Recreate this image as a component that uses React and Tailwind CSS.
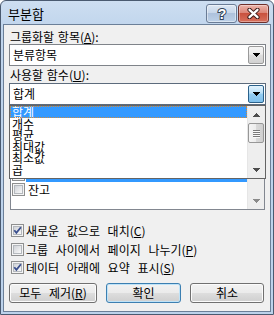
import React from "react";

function Tri({ dir = "down", color = "#000" }) {
  const rows = [
    [0, 7],
    [1, 5],
    [2, 3],
    [3, 1],
  ];
  return (
    <svg width="7" height="4" viewBox="0 0 7 4" shapeRendering="crispEdges">
      {rows.map(([i, w]) => (
        <rect key={i} x={i} y={dir === "down" ? i : 3 - i} width={w} height="1" fill={color} />
      ))}
    </svg>
  );
}

function Check({ checked }) {
  return (
    <div className="relative w-[13px] h-[13px] border border-[#8e8f8f] bg-[#f4f4f4] p-[1px] shrink-0">
      <div className="w-full h-full border border-[#b4b8bd] bg-gradient-to-br from-[#cfd2d7] to-[#fafafa]" />
      {checked && (
        <svg className="absolute left-[1px] top-[1px]" width="9" height="9" viewBox="0 0 9 9">
          <path d="M1.3 4.3 L3.4 6.9 L7.9 1.2" stroke="#3a4f8e" strokeWidth="1.8" fill="none" />
        </svg>
      )}
    </div>
  );
}

function Combo({ text, active }) {
  return (
    <div
      className={`h-[22px] w-[257px] border bg-white flex items-center ${
        active ? "border-[#5c6b7c]" : "border-[#7f8389]"
      }`}
    >
      <span className="pl-[3px] leading-[14px]">{text}</span>
      <div
        className={`ml-auto mr-[1px] h-[18px] w-[16px] rounded-[2px] border flex items-center justify-center ${
          active
            ? "border-[#2c628b] bg-[linear-gradient(#e3f3fd,#b9e0f8_45%,#94cdf2_50%,#7fc0ec)]"
            : "border-[#9a9a9a] bg-[linear-gradient(#f4f4f4,#ececec_45%,#dedede_50%,#d2d2d2)]"
        }`}
      >
        <Tri />
      </div>
    </div>
  );
}

function Thumb() {
  return (
    <div className="mr-[1px] h-[20px] rounded-[2px] border border-[#979797] bg-[linear-gradient(90deg,#f4f4f4,#ececec_50%,#d9d9d9_51%,#cfcfcf)] flex flex-col items-center justify-center gap-[1px]">
      {[0, 1, 2, 3].map((i) => (
        <div key={i} className="w-[7px] h-[1px] bg-[#7a7a7a] shadow-[0_1px_0_#fafafa]" />
      ))}
    </div>
  );
}

function Btn({ children, w, def }) {
  return (
    <div
      className={`${w} h-[20px] rounded-[3px] border flex items-center justify-center leading-[14px] bg-[linear-gradient(#f2f2f2,#ebebeb_48%,#dddddd_52%,#cfcfcf)] ${
        def
          ? "border-[#3c7fb1] shadow-[inset_0_0_0_1px_#bfe3f8]"
          : "border-[#707070] shadow-[inset_0_0_0_1px_#fbfbfb]"
      }`}
    >
      {children}
    </div>
  );
}

export default function App() {
  const ddItems = ["합계", "개수", "평균", "최대값", "최소값", "곱"];
  const listItems = ["", "", "", "", "", "잔고"];
  return (
    <div className="w-[274px] h-[315px] bg-white font-['Noto_Sans_CJK_KR','Noto_Sans',sans-serif] text-[12px] text-black">
      <div className="w-full h-full rounded-t-[6px] border border-[#4a5a70] bg-[linear-gradient(#cddef1,#bfd4ec_30px,#bcd2eb)] flex flex-col px-[2px] pb-[2px]">
        {/* title bar */}
        <div className="h-[23px] shrink-0 flex items-start">
          <div className="pl-[5px] pt-[5px] text-[13px] leading-[15px]">부분합</div>
          <div className="ml-auto flex gap-[1px] pt-[3px] pr-[2px]">
            <div className="w-[31px] h-[19px] rounded-[3px] border border-[#6a7c96] bg-[linear-gradient(#dde7f3,#c8d7ea_45%,#aec2dc_50%,#bcd0e7)] shadow-[inset_0_0_0_1px_rgba(255,255,255,0.45)] flex items-center justify-center">
              <svg width="12" height="15" viewBox="0 0 12 15">
                <text
                  x="6"
                  y="12.5"
                  textAnchor="middle"
                  fontSize="14"
                  fontWeight="bold"
                  fontFamily="Liberation Sans, sans-serif"
                  fill="#ffffff"
                  stroke="#34445a"
                  strokeWidth="2"
                  paintOrder="stroke"
                >
                  ?
                </text>
              </svg>
            </div>
            <div className="w-[31px] h-[19px] rounded-[3px] border border-[#6e2f2a] bg-[linear-gradient(#ecb4ab,#dc8678_45%,#c9523f_50%,#d7705c)] shadow-[inset_0_0_0_1px_rgba(255,255,255,0.35)] flex items-center justify-center">
              <svg width="13" height="11" viewBox="0 0 13 11">
                <path d="M2.5 1.8 L10.5 9.2 M10.5 1.8 L2.5 9.2" stroke="#3a1a17" strokeWidth="4.2" strokeLinecap="round" />
                <path d="M2.5 1.8 L10.5 9.2 M10.5 1.8 L2.5 9.2" stroke="#ffffff" strokeWidth="2.3" strokeLinecap="round" />
              </svg>
            </div>
          </div>
        </div>

        {/* body */}
        <div className="relative flex-1 border border-[#6b7f98] bg-[#f0f0f0] flex flex-col pl-[5px] pr-[4px]">
          <div className="mt-[5px] ml-[1px] h-[14px] leading-[14px] [word-spacing:1px]">
            그룹화할 항목(<u>A</u>):
          </div>
          <Combo text="분류항목" />
          <div className="mt-[2px] ml-[1px] h-[14px] leading-[14px] [word-spacing:1px]">
            사용할 함수(<u>U</u>):
          </div>
          <div className="mt-[1px]">
            <Combo text="합계" active />
          </div>

          {/* list box with checkboxes */}
          <div className="mt-[3px] ml-[1px] w-[255px] h-[102px] border border-[#828790] bg-white flex overflow-hidden">
            <div className="flex-1 overflow-hidden">
              <div className="-mt-[2px] flex flex-col">
                {listItems.map((t, i) => (
                  <div key={i} className="h-[15px] flex items-center">
                    <div className="ml-[1px]">
                      <Check />
                    </div>
                    <div
                      className={`ml-[1px] flex-1 h-full leading-[15px] px-[2px] ${
                        i === 4 ? "bg-[#3399ff] text-white" : ""
                      }`}
                    >
                      {t}
                    </div>
                  </div>
                ))}
              </div>
            </div>
            <div className="w-[17px] h-full border-l border-[#e6e6e6] bg-[#eeeeee] flex flex-col">
              <div className="h-[17px] flex items-center justify-center">
                <Tri dir="up" color="#5a5a5a" />
              </div>
              <Thumb />
              <div className="flex-1" />
              <div className="h-[17px] flex items-center justify-center">
                <Tri color="#8a8a8a" />
              </div>
            </div>
          </div>

          {/* dropdown list overlay */}
          <div className="absolute left-[5px] top-[80px] w-[257px] h-[74px] border border-[#646464] bg-white flex">
            <div className="flex-1 flex flex-col">
              {ddItems.map((t, i) => (
                <div
                  key={t}
                  className={`h-[11.5px] leading-[11.5px] pl-[2px] ${
                    i === 0
                      ? "bg-[#3399ff] text-white outline-1 outline-dotted outline-[#d08a3a] -outline-offset-1"
                      : ""
                  }`}
                >
                  {t}
                </div>
              ))}
            </div>
            <div className="w-[18px] h-full border-l border-[#e6e6e6] bg-[#eeeeee] flex flex-col">
              <div className="h-[17px] flex items-center justify-center">
                <Tri dir="up" color="#4d4d4d" />
              </div>
              <Thumb />
              <div className="flex-1" />
              <div className="h-[17px] flex items-center justify-center">
                <Tri color="#4d4d4d" />
              </div>
            </div>
          </div>

          {/* checkbox rows */}
          <div className="mt-[12px] ml-[2px] h-[17px] flex items-center gap-[2px] [word-spacing:5px]">
            <Check checked />
            <span className="leading-[14px]">
              새로운 값으로 대치(<u>C</u>)
            </span>
          </div>
          <div className="mt-[2px] ml-[2px] h-[17px] flex items-center gap-[2px] [word-spacing:5px]">
            <Check />
            <span className="leading-[14px]">
              그룹 사이에서 페이지 나누기(<u>P</u>)
            </span>
          </div>
          <div className="mt-[1px] ml-[2px] h-[17px] flex items-center gap-[2px] [word-spacing:5px]">
            <Check checked />
            <span className="leading-[14px]">
              데이터 아래에 요약 표시(<u>S</u>)
            </span>
          </div>

          {/* buttons */}
          <div className="mt-[7px] flex gap-[9px] [word-spacing:5px]">
            <Btn w="w-[88px]">
              모두 제거(<u>R</u>)
            </Btn>
            <Btn w="w-[75px]" def>
              확인
            </Btn>
            <Btn w="w-[74px]">취소</Btn>
          </div>
        </div>
      </div>
    </div>
  );
}
